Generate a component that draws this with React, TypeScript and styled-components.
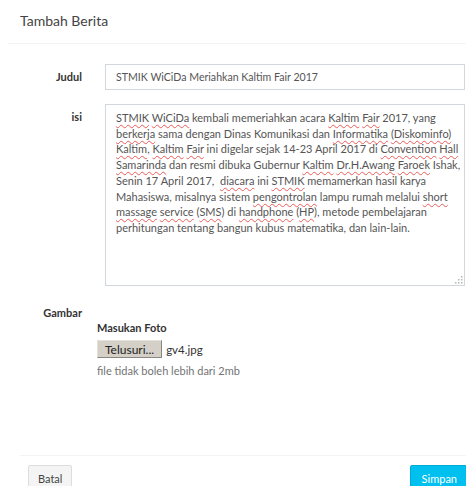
import React from 'react';
import styled, { createGlobalStyle } from 'styled-components';

const GlobalStyle = createGlobalStyle`
  html, body {
    margin: 0;
    padding: 0;
    background: #fff;
    overflow: hidden;
  }
  body {
    font-family: Lato, "Open Sans", "Liberation Sans", sans-serif;
    font-size: 11px;
    color: #333;
  }
  * {
    box-sizing: border-box;
  }
`;

const Box = styled.div`
  margin-left: 8px;
  width: 470px;
`;

const BoxHeader = styled.div`
  padding: 11px 12px 12px;
  border-bottom: 1px solid #f4f4f4;
`;

const BoxTitle = styled.h4`
  margin: 0;
  font-size: 14px;
  line-height: 20px;
  font-weight: 400;
  color: #444;
`;

const FormBody = styled.div`
  height: 411px;
  padding-top: 20px;
`;

const FormGroup = styled.div`
  display: grid;
  grid-template-columns: 74px 360px;
  column-gap: 23px;
  margin-bottom: 14px;
`;

const Label = styled.label`
  display: block;
  text-align: right;
  font-weight: 700;
  line-height: 16px;
  padding-top: 5px;
  color: #333;
`;

const Input = styled.div`
  height: 26px;
  border: 1px solid #d2d6de;
  padding: 0 10px;
  line-height: 24px;
  font-size: 10.6px;
  color: #555;
  white-space: nowrap;
  overflow: hidden;
`;

const TextArea = styled.div`
  position: relative;
  height: 182px;
  border: 1px solid #d2d6de;
  padding: 5px 10px;
  line-height: 15.7px;
  color: #555;
  white-space: pre;
`;

const Misspelled = styled.span`
  text-decoration: underline wavy #ec5a58;
  text-decoration-thickness: 1px;
  text-underline-offset: 1.5px;
  text-decoration-skip-ink: none;
`;

const ResizeGrip = styled.svg`
  position: absolute;
  right: 1px;
  bottom: 1px;
`;

const GambarLabel = styled(Label)`
  width: 74px;
`;

const FileBlock = styled.div`
  margin-left: 89px;
  margin-top: -1px;
`;

const SubLabel = styled.div`
  font-weight: 700;
  line-height: 16px;
`;

const FileRow = styled.div`
  display: flex;
  align-items: center;
  gap: 4px;
  margin-top: 4px;
  height: 18px;
`;

const BrowseButton = styled.span`
  display: inline-flex;
  align-items: center;
  height: 18px;
  padding: 0 7px;
  background: #d4d0c8;
  border: 1px solid #e4e1dc;
  border-right-color: #8a8780;
  border-bottom-color: #8a8780;
  font-size: 12px;
  color: #222;
`;

const FileName = styled.span`
  color: #333;
  font-size: 11.5px;
`;

const HelpText = styled.div`
  margin-top: 5px;
  line-height: 16px;
  color: #737373;
`;

const BoxFooter = styled.div`
  margin-left: 12px;
  border-top: 1px solid #f4f4f4;
  padding: 9px 8px 0;
  display: flex;
  justify-content: space-between;
`;

const Button = styled.button<{ $primary?: boolean }>`
  height: 26px;
  padding: ${p => (p.$primary ? '0 12px 0 11px' : '0 9px')};
  font-family: inherit;
  font-size: 11px;
  border-radius: 2px;
  border: 1px solid ${p => (p.$primary ? '#00acd6' : '#ddd')};
  background: ${p => (p.$primary ? '#00c0ef' : '#f4f4f4')};
  color: ${p => (p.$primary ? '#fff' : '#444')};
`;

const isiLines = [
  '~STMIK~ ~WiCiDa~ kembali memeriahkan acara ~Kaltim~ ~Fair~ 2017, yang',
  '~berkerja~ sama dengan Dinas Komunikasi dan ~Informatika~ ~(Diskominfo)~',
  '~Kaltim~, ~Kaltim~ ~Fair~ ini digelar sejak 14-23 April 2017 di ~Convention~ ~Hall~',
  '~Samarinda~ dan resmi dibuka Gubernur ~Kaltim~ ~Dr.H.Awang~ ~Faroek~ Ishak,',
  'Senin 17 April 2017,  ~diacara~ ini ~STMIK~ memamerkan hasil karya',
  'Mahasiswa, misalnya sistem ~pengontrolan~ lampu rumah melalui ~short~',
  '~massage~ ~service~ (~SMS~) di ~handphone~ (~HP~), metode pembelajaran',
  'perhitungan tentang bangun kubus matematika, dan lain-lain.',
];

// words between ~ get the spell-check squiggle
const renderLine = (line: string) =>
  line.split('~').map((part, i) =>
    i % 2 === 1 ? <Misspelled key={i}>{part}</Misspelled> : <React.Fragment key={i}>{part}</React.Fragment>
  );

const Grip = () => (
  <ResizeGrip width="9" height="9" viewBox="0 0 9 9">
    {[
      [7, 1], [4, 4], [7, 4], [1, 7], [4, 7], [7, 7],
    ].map(([x, y]) => (
      <rect key={`${x}-${y}`} x={x} y={y} width="1.5" height="1.5" fill="#b8b8b8" />
    ))}
  </ResizeGrip>
);

export default function App() {
  return (
    <>
      <GlobalStyle />
      <Box>
        <BoxHeader>
          <BoxTitle>Tambah Berita</BoxTitle>
        </BoxHeader>

        <FormBody>
          <FormGroup>
            <Label>Judul</Label>
            <Input>STMIK WiCiDa Meriahkan Kaltim Fair 2017</Input>
          </FormGroup>

          <FormGroup>
            <Label>isi</Label>
            <TextArea>
              {isiLines.map((line, i) => (
                <div key={i}>{renderLine(line)}</div>
              ))}
              <Grip />
            </TextArea>
          </FormGroup>

          <GambarLabel>Gambar</GambarLabel>
          <FileBlock>
            <SubLabel>Masukan Foto</SubLabel>
            <FileRow>
              <BrowseButton>Telusuri...</BrowseButton>
              <FileName>gv4.jpg</FileName>
            </FileRow>
            <HelpText>file tidak boleh lebih dari 2mb</HelpText>
          </FileBlock>
        </FormBody>

        <BoxFooter>
          <Button>Batal</Button>
          <Button $primary>Simpan</Button>
        </BoxFooter>
      </Box>
    </>
  );
}
